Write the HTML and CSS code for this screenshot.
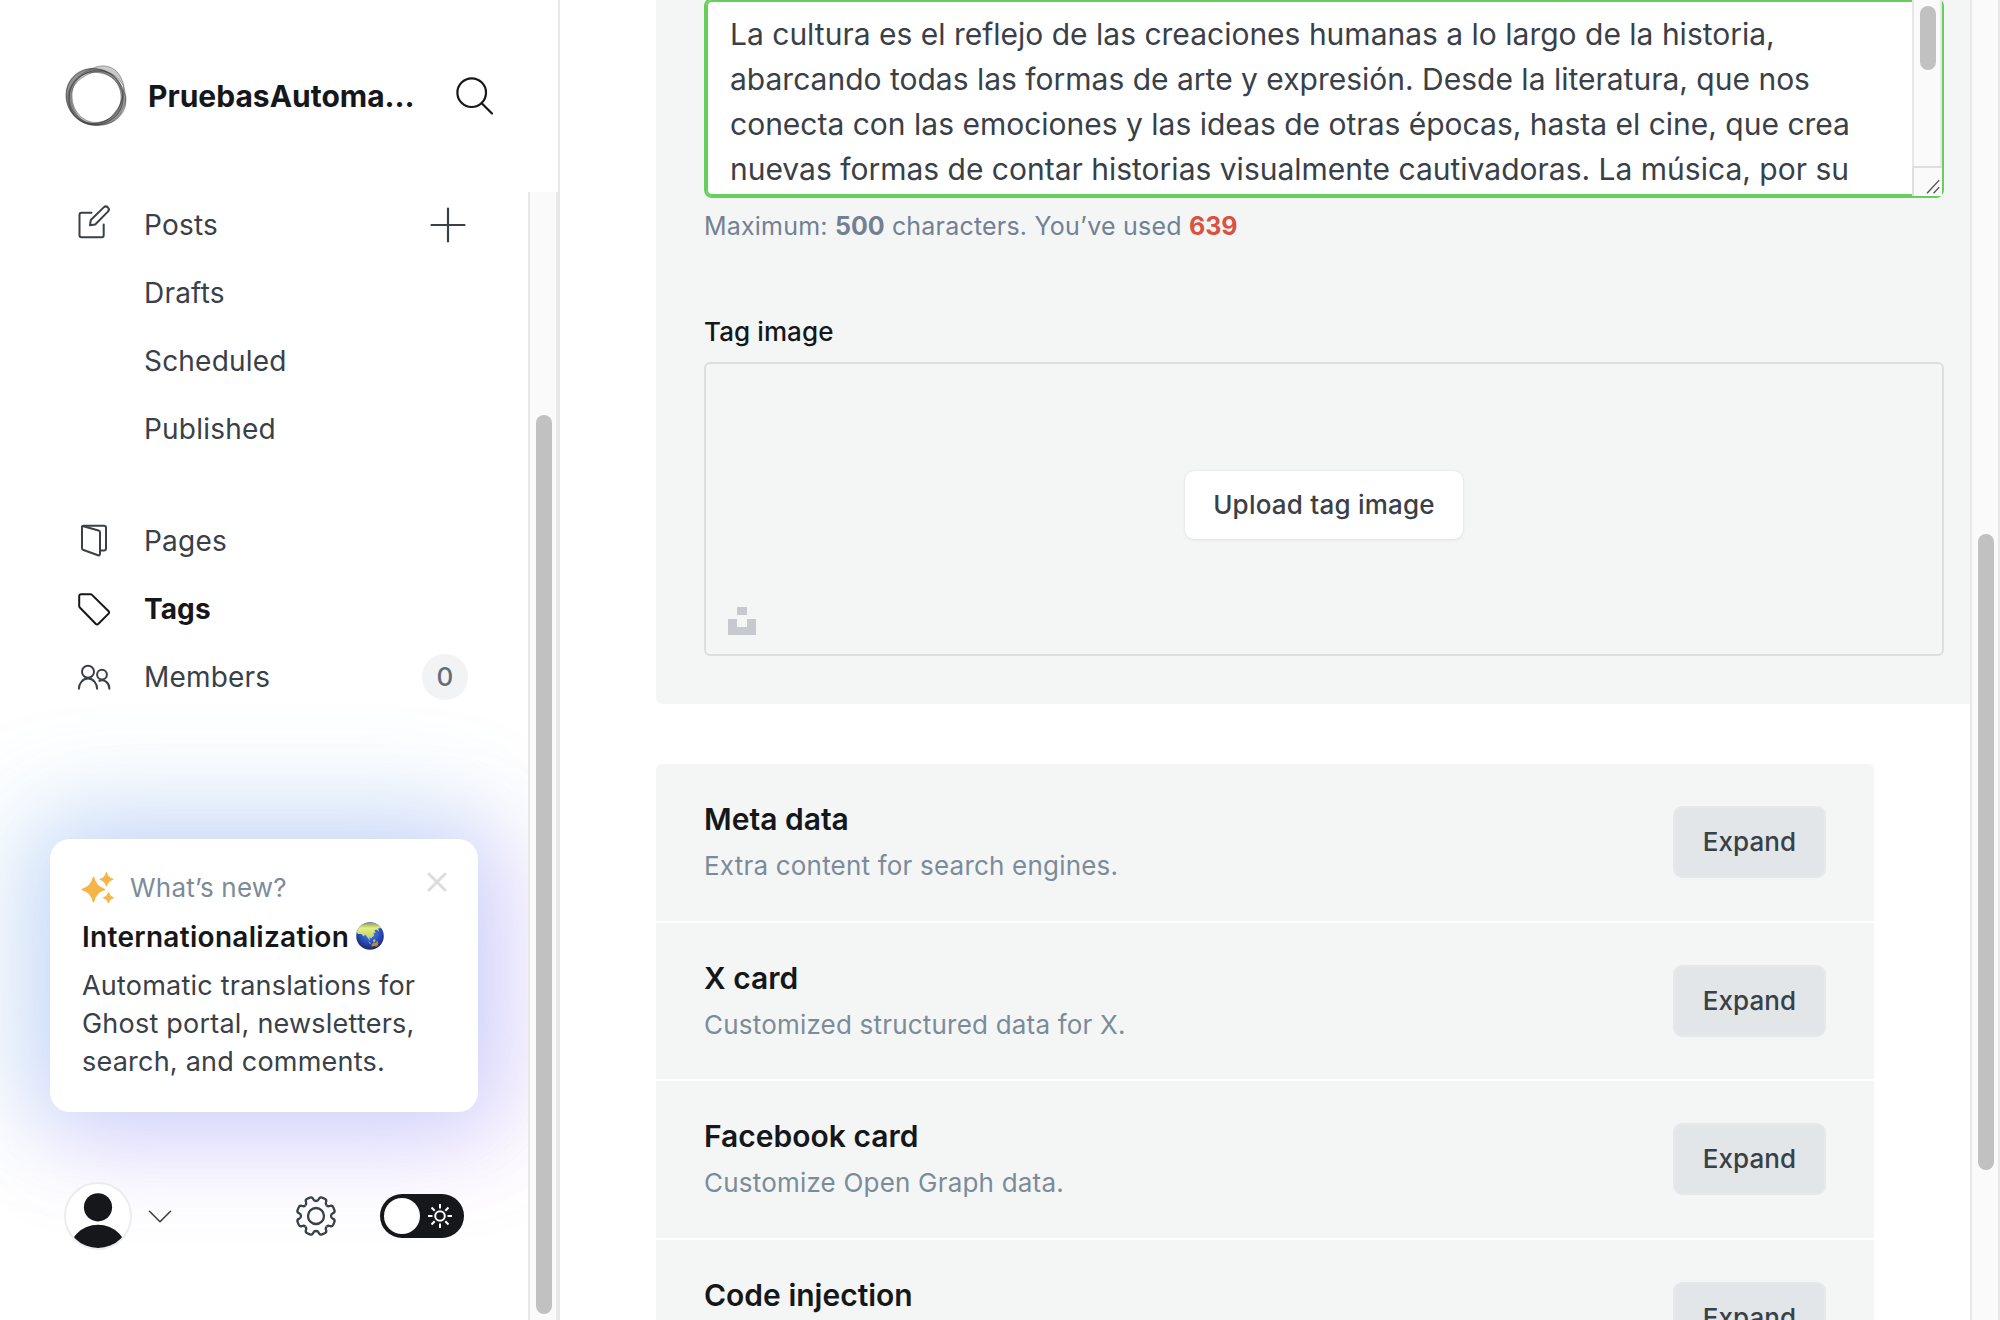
FILE: index.html
```html
<!DOCTYPE html>
<html lang="en">
<head>
<meta charset="utf-8">
<title>Tags</title>
<link rel="stylesheet" href="styles.css">
</head>
<body>
<aside class="sidebar">
  <header class="site">
    <svg class="site-logo" viewBox="0 0 62 62">
      <g fill-rule="evenodd" stroke="#1a1a1a" stroke-width=".6" stroke-opacity=".6">
        <path fill="#555" fill-opacity=".4" d="M1 30C1 14 14 3 28 3.500C46 4 58 15 58 32C58 49 45 60 31 60C14 60 1 47 1 30ZM7 31C7 46 18 57.500 31 57.500C45 57 56 46 56 32C56 17 44 6.500 30 6.500C17 6.500 7 17 7 31Z"/>
        <path fill="#777" fill-opacity=".4" d="M3 34C2 19 15 9 26 4C36-1 46 0 52 7C59 14 59 24 61 32C61 40 57 44 56 48C50 57 42 60 30 60.500C14 60 4 48 3 34ZM6 33C7 47 16 59 29 58.500C42 57 49 52 54 43C57 36 60 25 58 20C53 12 48 9 42 7.500C36 5.500 28 6 20 11C11 16 5 24 6 33Z"/>
        <path fill="#555" fill-opacity=".4" d="M2 24C5 10 20 2 32 4C46 6 56 16 59 27C63 38 60 46 54 52C46 61 32 62 20 58C6 52-1 38 2 24ZM5 26C2 40 10 53 22 57.500C34 61 44 56 50 47C56 40 59 33 56 25C52 14 43 8.500 32 7.500C19 6 8 14 5 26Z"/>
        <path fill="none" d="M4 36C3 18 18 6 33 5C46 5 57 17 58 30C60 45 48 58 32 59.500C17 60 5 50 4 36Z"/>
      </g>
    </svg>
    <h1 class="site-name">PruebasAutoma…</h1>
    <svg class="site-search" viewBox="0 0 40 40" fill="none" stroke="#15171a" stroke-width="2.200" stroke-linecap="round"><circle cx="16.700" cy="16.700" r="14.300"/><path d="M27 27.500L37 37.500"/></svg>
  </header>
  <div class="sidebar-body">
    <div class="sidebar-main">
      <nav class="nav">
        <a class="nav-item">
          <svg class="icon" viewBox="0 0 32 32"><path d="M13.500 4.800H3.500a2 2 0 0 0-2 2V27.200a2 2 0 0 0 2 2H23.700a2 2 0 0 0 2-2V16.500"/><path d="M12 17.300l.8-5.300L25.700-.6a2.900 2.900 0 0 1 4.200 4.200L17.200 16.500z"/></svg>
          <span class="label">Posts</span>
          <svg class="plus" viewBox="0 0 34 34"><path d="M17 .5v33M.5 17h33"/></svg>
        </a>
        <a class="nav-item nested">Drafts</a>
        <a class="nav-item nested">Scheduled</a>
        <a class="nav-item nested">Published</a>
      </nav>
      <nav class="nav nav-second">
        <a class="nav-item">
          <svg class="icon" viewBox="0 0 32 32"><path d="M4 3.200a1.500 1.500 0 0 1 1.500-1.400H26a2 2 0 0 1 2 2V24.500a2 2 0 0 1-2 2H22"/><path d="M4 3.500V24a2 2 0 0 0 1.500 2L20 31.300a1.500 1.500 0 0 0 2-1.500V8.500a2 2 0 0 0-1.500-2L5.500 2.300A1.200 1.200 0 0 0 4 3.500z"/></svg>
          <span class="label">Pages</span>
        </a>
        <a class="nav-item active">
          <svg class="icon" viewBox="0 0 32 32"><path d="M3 2.300H12.600a2 2 0 0 1 1.400.6L30.600 19.300a1.600 1.600 0 0 1 0 2.300L20.200 32a1.600 1.600 0 0 1-2.300 0L1.800 15.500a2 2 0 0 1-.6-1.400V4a1.700 1.700 0 0 1 1.800-1.700z"/></svg>
          <span class="label">Tags</span>
        </a>
        <a class="nav-item">
          <svg class="icon" viewBox="0 0 32 32"><circle cx="10" cy="11.700" r="6"/><path d="M.9 28.800a9.100 10.200 0 0 1 18.200 0"/><circle cx="24" cy="14.600" r="4.900"/><path d="M21.400 20.900c5-2 10 2 10 7.900"/></svg>
          <span class="label">Members</span>
          <span class="count">0</span>
        </a>
      </nav>
      <section class="news">
        <div class="news-head">
          <svg class="sparkle" viewBox="0 0 32 32" fill="#f5b547"><path d="M11.500 5.500Q13.500 15 22.500 17.500Q13.500 20 11.500 29.500Q9.500 20 .3 17.500Q9.500 15 11.500 5.500Z" stroke="#f5b547" stroke-width="1.600" stroke-linejoin="round"/><path d="M24.500 .5Q25.800 6 31.200 7.300Q25.800 8.600 24.500 14.200Q23.200 8.600 17.800 7.300Q23.200 6 24.500 .5ZM26.500 20.500Q27.300 24.800 31.500 25.800Q27.300 26.800 26.500 31Q25.700 26.800 21.300 25.800Q25.700 24.800 26.500 20.500Z" stroke="#f5b547" stroke-linejoin="round"/></svg>
          <span class="news-label">What’s new?</span>
          <svg class="close" viewBox="0 0 20 20"><path d="M2 2l16 16M18 2L2 18" stroke="#dcdcdc" stroke-width="3" stroke-linecap="round"/></svg>
        </div>
        <h2 class="news-title">Internationalization
          <svg class="globe" viewBox="0 0 28 28">
            <defs><radialGradient id="sea" cx=".5" cy=".35" r=".65"><stop offset="0" stop-color="#5b8bea"/><stop offset=".55" stop-color="#2e50c4"/><stop offset="1" stop-color="#1b2766"/></radialGradient>
            <linearGradient id="land" x1="0" y1="0" x2="0" y2="1"><stop offset="0" stop-color="#8d9a5a"/><stop offset=".3" stop-color="#e6ee7d"/><stop offset="1" stop-color="#a9cf7a"/></linearGradient></defs>
            <circle cx="14" cy="14" r="13.800" fill="url(#sea)"/>
            <path fill="url(#land)" d="M2.500 6.500C6 1.500 11 .4 15 .5C20 .9 23.500 3 25.300 6L22 6.500L23 9.500L20.500 7.500L18.500 8L19.500 11L17.500 10.500L18 13.500L15 16.500L13.500 15L14 19L11.500 15.500L9 12.500L7.500 14.500L5.500 12L2 12L.8 10Z"/>
            <path fill="#9cc7a0" d="M12 19l3 2.500-1 .6zM17 18l2-1 .5 2.500-2 .8z"/>
            <path fill="#b58c35" d="M15.500 22.500L18 20l1.500 1L21 18.500l1.500 3-1.500 3-3-.5-2.500.8z"/>
          </svg>
        </h2>
        <p class="news-text">Automatic translations for<br>Ghost portal, newsletters,<br>search, and comments.</p>
      </section>
      <footer class="account">
        <svg class="avatar" viewBox="0 0 68 68">
          <defs><clipPath id="face"><circle cx="34" cy="34" r="32"/></clipPath></defs>
          <circle cx="34" cy="34" r="33" fill="#fff" stroke="#ebecee" stroke-width="2"/>
          <g clip-path="url(#face)" fill="#15171a"><circle cx="34" cy="25.300" r="14.100"/><circle cx="34" cy="73" r="30.200"/></g>
        </svg>
        <svg class="chevron" viewBox="0 0 24 14"><path d="M1.500 2.300L12 12.700L22.500 2.300"/></svg>
        <svg class="gear" viewBox="-21 -21 42 42">
          <defs><path id="tooth" d="M-5.740-13.860C-3.700-14.700-4-16-3.900-17C-3.800-18.700-2.800-19.300-1.400-19.300H1.400C2.800-19.300 3.800-18.700 3.900-17C4-16 3.700-14.700 5.740-13.860"/></defs>
          <g transform="rotate(22.500)"><use href="#tooth"/><use href="#tooth" transform="rotate(45)"/><use href="#tooth" transform="rotate(90)"/><use href="#tooth" transform="rotate(135)"/><use href="#tooth" transform="rotate(180)"/><use href="#tooth" transform="rotate(225)"/><use href="#tooth" transform="rotate(270)"/><use href="#tooth" transform="rotate(315)"/></g>
          <circle r="8"/>
        </svg>
        <span class="toggle">
          <span class="knob"></span>
          <svg class="sun" viewBox="-12 -12 24 24"><circle r="4.800"/><path d="M0-12v4.500M0 12V7.500M-12 0h4.500M12 0H7.500M-8.500-8.500l3.200 3.200M8.500 8.500L5.300 5.300M-8.500 8.500l3.200-3.200M8.500-8.500L5.300-5.300"/></svg>
        </span>
      </footer>
    </div>
    <div class="track side-track"><div class="thumb"></div></div>
  </div>
</aside>
<main class="content">
  <div class="page">
    <section class="panel">
      <div class="description">
        <div class="description-text">La cultura es el reflejo de las creaciones humanas a lo largo de la historia,<br>abarcando todas las formas de arte y expresión. Desde la literatura, que nos<br>conecta con las emociones y las ideas de otras épocas, hasta el cine, que crea<br>nuevas formas de contar historias visualmente cautivadoras. La música, por su</div>
        <div class="description-scroll">
          <div class="track text-track"><div class="thumb"></div></div>
          <svg class="resizer" viewBox="0 0 30 30"><path d="M14 27L27 13M21 27L27 20.500"/></svg>
        </div>
      </div>
      <p class="hint">Maximum: <b>500</b> characters. You’ve used <b class="over">639</b></p>
      <h3 class="field-label">Tag image</h3>
      <div class="uploader">
        <button class="upload">Upload tag image</button>
        <svg class="unsplash" viewBox="0 0 28 28"><path d="M9 0h10v8H9zM0 12h9v8h10v-8h9v16H0z"/></svg>
      </div>
    </section>
    <section class="expanders">
      <div class="row"><div><h4>Meta data</h4><p>Extra content for search engines.</p></div><button class="expand">Expand</button></div>
      <div class="row"><div><h4>X card</h4><p>Customized structured data for X.</p></div><button class="expand">Expand</button></div>
      <div class="row"><div><h4>Facebook card</h4><p>Customize Open Graph data.</p></div><button class="expand">Expand</button></div>
      <div class="row"><div><h4>Code injection</h4><p></p></div><button class="expand">Expand</button></div>
    </section>
  </div>
  <div class="track main-track"><div class="thumb"></div></div>
</main>
</body>
</html>
```
FILE: styles.css
```css
* { box-sizing: border-box; }
body, h1, h2, h3, h4, p { margin: 0; }
body {
  display: flex;
  width: 2000px;
  height: 1320px;
  overflow: hidden;
  background: #fff;
  color: #15171a;
  font-family: Inter, "Liberation Sans", sans-serif;
}
svg { display: block; flex: none; overflow: visible; }
button { font: inherit; flex: none; }

/* Scrollbars */
.track { flex: none; background: #fafafa; border: solid #e8e8e8; border-width: 0 2px; }
.thumb { background: #c1c1c1; border-radius: 8px; }

/* Sidebar */
.sidebar {
  display: flex;
  flex-direction: column;
  flex: none;
  width: 560px;
  border-right: 2px solid #e6e7e8;
}
.site { display: flex; align-items: center; height: 192px; padding-left: 65px; }
.site-logo { width: 62px; height: 62px; }
.site-name { flex: none; width: 307px; margin-left: 21px; font-size: 30px; line-height: 40px; font-weight: 700; }
.site-search { width: 40px; height: 40px; }
.sidebar-body { display: flex; height: 1128px; }
.sidebar-main { width: 528px; height: 1128px; overflow: hidden; }
.side-track { width: 30px; padding: 223px 4px 0 6px; }
.side-track .thumb { width: 16px; height: 899px; }

.nav { margin-top: -2px; }
.nav-second { margin-top: 44px; }
.nav-item {
  display: flex;
  align-items: center;
  height: 68px;
  padding: 1px 60px 0 78px;
  color: #394047;
  font-size: 28px;
  letter-spacing: .2px;
}
.nested { padding-left: 144px; }
.icon { width: 32px; height: 32px; margin: -1px 34px 0 0; fill: none; stroke: currentColor; stroke-width: 2; stroke-linecap: round; stroke-linejoin: round; }
.label { flex: 1; }
.plus { width: 34px; height: 34px; margin-right: 3px; stroke: currentColor; stroke-width: 2.200; stroke-linecap: round; }
.active { color: #15171a; font-weight: 700; letter-spacing: .1px; }
.count { width: 46px; height: 46px; border-radius: 50%; background: #f1f3f4; color: #626d79; font-size: 26px; line-height: 46px; font-weight: 500; text-align: center; }

.news {
  width: 428px;
  height: 273px;
  margin: 129px 0 0 50px;
  padding: 32px;
  border-radius: 20px;
  background: #fff;
  box-shadow: -14px -12px 100px 18px rgba(75, 205, 226, .25), 14px 12px 96px 18px rgba(190, 105, 250, .29);
}
.news-head { display: flex; align-items: center; height: 34px; }
.sparkle { width: 32px; height: 32px; }
.news-label { flex: 1; margin: -2px 0 0 16px; color: #7c8b9a; font-size: 26px; letter-spacing: .2px; }
.close { width: 20px; height: 20px; margin: -12px -1px 0 0; }
.news-title { display: flex; align-items: center; gap: 7px; margin-top: 13px; font-size: 28px; line-height: 38px; font-weight: 600; letter-spacing: .3px; }
.globe { width: 28px; height: 28px; margin-top: -2px; }
.news-text { margin-top: 11px; color: #394047; font-size: 27px; line-height: 38px; letter-spacing: .22px; white-space: nowrap; }

.account { display: flex; align-items: center; height: 68px; margin-top: 70px; padding-left: 64px; }
.avatar { width: 68px; height: 68px; }
.chevron { width: 24px; height: 14px; margin-left: 16px; fill: none; stroke: #394047; stroke-width: 1.600; stroke-linecap: round; stroke-linejoin: round; }
.gear { width: 42px; height: 42px; margin-left: 123px; fill: none; stroke: #394047; stroke-width: 2.300; }
.toggle { display: flex; align-items: center; width: 84px; height: 44px; margin-left: 43px; padding: 0 12px 0 4px; justify-content: space-between; border-radius: 22px; background: #15171a; }
.knob { width: 36px; height: 36px; border-radius: 50%; background: #fff; }
.sun { width: 24px; height: 24px; fill: none; stroke: #fff; stroke-width: 2; }

/* Content */
.content { display: flex; flex: none; width: 1440px; }
.page { width: 1410px; height: 1320px; padding-left: 96px; overflow: hidden; }
.main-track { width: 30px; padding: 534px 4px 0 6px; }
.main-track .thumb { width: 16px; height: 636px; }

.panel { display: flow-root; height: 704px; padding: 0 26px 0 48px; border-radius: 0 0 0 6px; background: #f4f6f6; }
.description {
  display: flex;
  height: 200px;
  margin-top: -2px;
  border: 2px solid #66cf59;
  border-radius: 8px;
  background: #fff;
  box-shadow: inset 0 0 0 2px #66cf59;
}
.description-text { flex: 1; padding: 12px 0 0 24px; color: #394047; font-size: 30px; line-height: 45px; white-space: nowrap; }
.description-scroll { width: 30px; }
.text-track { width: 30px; height: 166px; padding: 6px 4px 0 6px; }
.text-track .thumb { width: 16px; height: 64px; }
.resizer { width: 30px; height: 30px; border: solid #dedede; border-width: 2px 0 0 2px; background: #fafafa; fill: none; stroke: #555; stroke-width: 1.500; }
.hint { margin-top: 12px; color: #738093; font-size: 25px; line-height: 32px; letter-spacing: .2px; }
.hint b { font-weight: 700; letter-spacing: 0; }
.hint .over { color: #d9533f; }
.field-label { margin-top: 72px; font-size: 26px; line-height: 36px; font-weight: 500; letter-spacing: .1px; }
.uploader { height: 294px; margin-top: 12px; padding: 107px 0 0 22px; border: 2px solid #dcdfdf; border-radius: 6px; }
.upload { display: block; width: 278px; height: 68px; margin: 0 0 0 457px; padding: 0 0 2px; border: 0; border-radius: 9px; background: #fff; box-shadow: 0 0 2px rgba(0, 0, 0, .1), 0 1px 4px rgba(0, 0, 0, .05); color: #394047; font-size: 26px; font-weight: 500; letter-spacing: .22px; }
.unsplash { width: 28px; height: 28px; margin-top: 68px; fill: #c6c9cd; }

.expanders { width: 1218px; margin-top: 60px; border-radius: 6px; overflow: hidden; }
.row { display: flex; align-items: center; justify-content: space-between; height: 158.5px; padding: 0 48px; border-bottom: 2px solid #fff; background: #f4f6f6; background-clip: padding-box; }
.row h4 { font-size: 30px; line-height: 36px; font-weight: 600; letter-spacing: 0; }
.row p { min-height: 34px; margin-top: 12px; color: #7c8b9a; font-size: 26px; line-height: 34px; letter-spacing: .2px; }
.expand { width: 153px; height: 72px; padding: 0 0 1px; border: 2px solid #e6e8ea; border-radius: 9px; background: #e2e6e9; color: #394047; font-size: 26px; font-weight: 500; letter-spacing: .1px; }
```
